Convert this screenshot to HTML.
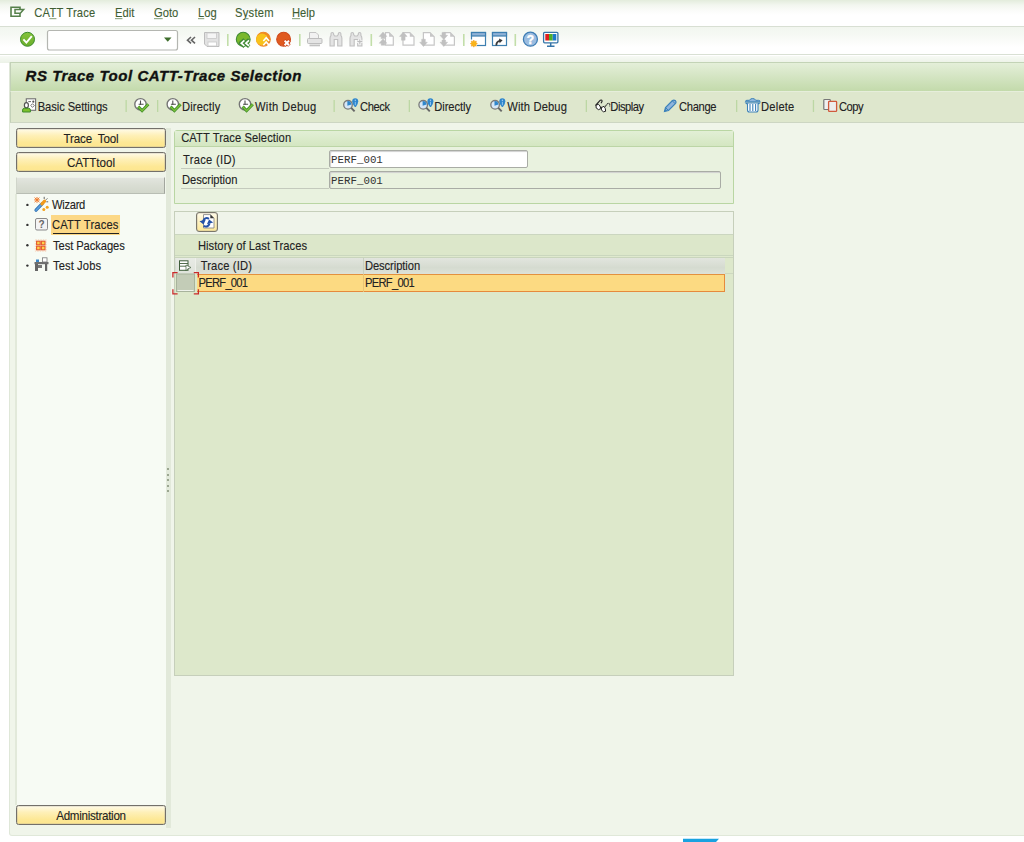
<!DOCTYPE html>
<html><head><meta charset="utf-8">
<style>
*{margin:0;padding:0;box-sizing:border-box}
html,body{width:1024px;height:842px;overflow:hidden;background:#fff;font-family:"Liberation Sans",sans-serif;font-size:11px;color:#222}
.a{position:absolute}
.t{position:absolute;white-space:nowrap;font-size:11.2px;line-height:13px;-webkit-text-stroke:0.1px currentColor;transform:scaleY(1.12);transform-origin:0 10.4px}
svg{position:absolute;overflow:visible}
#menubar{left:0;top:0;width:1024px;height:27px;background:linear-gradient(#e3ecdc 0px,#f2f6ef 5px,#fbfcfa 11px,#ffffff 15px,#ffffff 25px);border-bottom:1.3px solid #d8dfd3}
#menubar .t{color:#3f5e33;top:6.5px}
.u{text-decoration:underline;text-decoration-color:#8fa882}
#systb{left:0;top:27px;width:1024px;height:28px;background:linear-gradient(#f2f6ef 0px,#f6f9f4 8px,#fcfdfb 16px,#ffffff 20px);border-bottom:1.5px solid #d9e0d4}
#gap{left:0;top:55.5px;width:1024px;height:7.5px;background:linear-gradient(#f7faf5,#ecf2e7)}
.sep{position:absolute;width:2px;background:#c4dfae}
#frame{left:9px;top:62px;width:1015px;height:774px;background:#f0f5ea;border-left:1px solid #dfe7d8;border-bottom:1.5px solid #e0e8d9;border-radius:0 0 0 3px}
#title{left:10px;top:62px;width:1014px;height:29px;background:linear-gradient(#e4efd9,#c3daab);border-top:1.5px solid #c3d3b6;border-left:1px solid #c3d1b8}
#title .tt{position:absolute;left:14.5px;top:2.5px;font-size:15px;letter-spacing:0.55px;line-height:20px;font-weight:bold;font-style:italic;color:#111;white-space:nowrap;-webkit-text-stroke:0.35px #111}
#apptb{left:10px;top:91px;width:1014px;height:32px;background:#dee7cd;border-top:1px solid #e6eedb;border-bottom:1.6px solid #cdd6c3;border-left:1px solid #c3d1b8}
.btn{position:absolute;border:1px solid #73706a;border-radius:2.5px;background:linear-gradient(#fffbe9 0%,#fef0b8 35%,#fde895 75%,#fde68e);box-shadow:inset 0 0 0 0.3px #a9a59a;text-align:center;line-height:17px;padding-top:0.5px;font-size:11.6px;color:#222}
.bs{display:inline-block;transform:scaleY(1.1);transform-origin:0 12px;-webkit-text-stroke:0.1px currentColor}
#graybar{left:16px;top:176.5px;width:149px;height:17.5px;background:linear-gradient(#e2e5de,#d9ddd3 50%,#d2d7cb);border-top:1px solid #eef1ea;border-bottom:1px solid #b9beb4;border-right:1.5px solid #a2a69e;border-left:1px solid #d0d5ca}
#tree{left:15px;top:194px;width:151px;height:611px;background:#f7fbf4;border-left:2px solid #e2e9da}
#splitter{left:166px;top:128px;width:5px;height:700px;background:#e2e9da}
.dot{position:absolute;left:167px;width:2px;height:2px;background:#9ba690}
#g1{left:174px;top:130px;width:560px;height:74px;background:#e9f2df;border:1px solid #b9d6a3;border-radius:3px 3px 0 0}
#g1h{left:175px;top:131px;width:558px;height:16px;background:linear-gradient(#e2efd6,#d4e7c1);border-bottom:1px solid #bcd5a6}
.lbl{position:absolute;height:1.4px;background:#c4cabd}
.inp{position:absolute;border:1px solid #a9aca5;border-radius:2px;box-shadow:inset 1px 1px 1px #d0d0d0}
.mono{position:absolute;font-family:"Liberation Mono",monospace;font-size:10.8px;line-height:13px;color:#333;white-space:nowrap}
#g2{left:174px;top:211px;width:560px;height:465px;background:#dde8cb;border:1px solid #c6cfbb}
#g2tb{left:175px;top:212px;width:558px;height:23px;background:#eff4ea;border-bottom:1px solid #cbd6c0}
#g2title{left:175px;top:235px;width:558px;height:23px;background:linear-gradient(#dce7ca 0,#dce7ca 20px,#cad7be 20px,#cad7be 21px,#dfe9ce 21px,#dfe9ce 22px);border-bottom:1px solid #c9d5bc}
#thead{left:175px;top:258px;width:550px;height:16px;background:linear-gradient(#e2e5de,#d5dbd0 60%,#dde2d8)}
#row{left:197px;top:274px;width:528px;height:18px;background:#fcda82;border-top:1.5px solid #e3913f;border-bottom:1px solid #e68a3c;border-right:1px solid #e68a3c}
</style></head><body>

<!-- menu bar -->
<div id="menubar" class="a">
  <svg style="left:0;top:0" width="30" height="26">
    <path d="M20 9 V7.2 H11 V16.3 H20 V14" fill="none" stroke="#55804a" stroke-width="1.6"/>
    <path d="M15 9.6 H23.6 L20.3 13.2 H15 Z" fill="none" stroke="#55804a" stroke-width="1.5"/>
  </svg>
  <div class="t" style="left:34.3px;letter-spacing:0.19px">CA<span class="u">T</span>T Trace</div>
  <div class="t" style="left:115px"><span class="u">E</span>dit</div>
  <div class="t" style="left:154px"><span class="u">G</span>oto</div>
  <div class="t" style="left:198px"><span class="u">L</span>og</div>
  <div class="t" style="left:235px;letter-spacing:0.24px">S<span class="u">y</span>stem</div>
  <div class="t" style="left:292px"><span class="u">H</span>elp</div>
</div>

<!-- system toolbar -->
<div id="systb" class="a"></div>
<div id="gap" class="a"></div>
<svg style="left:0;top:0" width="1024" height="56">
  <!-- check -->
  <defs><linearGradient id="gck" x1="0" y1="0" x2="0" y2="1"><stop offset="0" stop-color="#86c43c"/><stop offset="1" stop-color="#6aad2b"/></linearGradient></defs>
  <circle cx="27.5" cy="39.3" r="7" fill="url(#gck)" stroke="#3f8d30" stroke-width="1"/>
  <path d="M23.4 39.4 L26.4 42.6 L31.8 36.2" fill="none" stroke="#fff" stroke-width="1.9"/>
  <!-- command field -->
  <rect x="47.5" y="30.5" width="130" height="19.5" rx="2" fill="#fff" stroke="#b4b6b1" stroke-width="1.2"/>
  <path d="M164 37.6 H171.5 L167.75 41.8 Z" fill="#3f6e2d"/>
  <!-- << -->
  <path d="M191 37 L187.5 40.2 L191 43.4 M195 37 L191.5 40.2 L195 43.4" fill="none" stroke="#666" stroke-width="1.6"/>
  <!-- save -->
  <path d="M204.5 32.5 H219 V46.5 H207 L204.5 44 Z" fill="#e2e2e2" stroke="#bdbdbd" stroke-width="1"/>
  <rect x="207" y="33" width="9.5" height="5.5" fill="#f5f5f5" stroke="#c8c8c8" stroke-width="0.8"/>
  <rect x="208" y="42" width="8.5" height="4" fill="#fff" stroke="#c8c8c8" stroke-width="0.8"/>
  <!-- separators -->
  <rect x="227" y="34" width="1.6" height="12" fill="#c2dea9"/>
  <rect x="299" y="34" width="1.6" height="12" fill="#c2dea9"/>
  <rect x="370.5" y="34" width="1.6" height="12" fill="#c2dea9"/>
  <rect x="463" y="34" width="1.6" height="12" fill="#c2dea9"/>
  <rect x="514.5" y="34" width="1.6" height="12" fill="#c2dea9"/>
  <!-- back green -->
  <circle cx="243.2" cy="39.2" r="6.9" fill="#7ab82c" stroke="#3f8a34" stroke-width="1.1"/>
  <path d="M244.6 39.6 L240.4 43.2 L244.6 46.6 M249.2 39.6 L245 43.2 L249.2 46.6" fill="none" stroke="#3f8a34" stroke-width="3.6" stroke-linejoin="round"/>
  <path d="M244.4 40.4 L241.3 43.2 L244.4 45.8 M249 40.4 L245.9 43.2 L249 45.8" fill="none" stroke="#fff" stroke-width="1.7"/>
  <!-- exit orange -->
  <circle cx="263.4" cy="39.2" r="6.9" fill="#ef8a25" stroke="#ef8a25" stroke-width="1.1"/>
  <circle cx="262" cy="39.4" r="5.9" fill="#f8c21b"/>
  <path d="M263.3 41 L266.2 37.8 L269.1 41 M263.3 45.2 L266.2 42 L269.1 45.2" fill="none" stroke="#fff" stroke-width="1.6"/>
  <!-- cancel red -->
  <circle cx="283.6" cy="39.2" r="6.9" fill="#e05a1f" stroke="#cf4a1c" stroke-width="1.1"/>
  <path d="M284.2 40.2 L289.4 45.6 M289.4 40.2 L284.2 45.6" stroke="#cf4a1c" stroke-width="3.6"/>
  <path d="M284.6 40.6 L289 45.2 M289 40.6 L284.6 45.2" stroke="#fff" stroke-width="2"/>
  <!-- print -->
  <path d="M309.5 32.5 H316 L318.5 35 V38.5 H309.5 Z" fill="#f2f2f2" stroke="#c4c4c4" stroke-width="1"/>
  <rect x="307.5" y="38.5" width="14.5" height="5" rx="1" fill="#e4e4e4" stroke="#bdbdbd" stroke-width="1"/>
  <rect x="309.5" y="44.5" width="10.5" height="1.8" fill="#c2c2c2"/>
  <!-- binoculars -->
  <path d="M330.0 46 V38.5 Q330.0 36.5 331.0 35.5 V33.8 Q331.0 32.5 332.3 32.5 Q333.6 32.5 333.6 33.8 V34.5 L334.7 36 H337.2 L338.3 34.5 V33.8 Q338.3 32.5 339.6 32.5 Q340.9 32.5 340.9 33.8 V35.5 Q341.9 36.5 341.9 38.5 V46 H337.7 V39.5 H334.2 V46 Z" fill="#e4e4e4" stroke="#c0c0c0" stroke-width="1.1"/>
  <path d="M350.0 46 V38.5 Q350.0 36.5 351.0 35.5 V33.8 Q351.0 32.5 352.3 32.5 Q353.6 32.5 353.6 33.8 V34.5 L354.7 36 H357.2 L358.3 34.5 V33.8 Q358.3 32.5 359.6 32.5 Q360.9 32.5 360.9 33.8 V35.5 Q361.9 36.5 361.9 38.5 V46 H357.7 V39.5 H354.2 V46 Z" fill="#e4e4e4" stroke="#c0c0c0" stroke-width="1.1"/>
  <path d="M359.8 38.8 V44.6 M356.9 41.7 H362.7" stroke="#fff" stroke-width="2.6"/>
  <path d="M359.8 39.2 V44.2 M357.3 41.7 H362.3" stroke="#bdbdbd" stroke-width="1.2"/>
  <!-- page icons -->
  <path d="M385.5 32.6 H389.1 L393.3 36.8 V45.1 H385.5 Z" fill="#fff" stroke="#c6c6c6" stroke-width="1.2"/>
  <path d="M389.1 32.6 L393.3 36.8 H389.1 Z" fill="#c6c6c6"/>
  <path d="M403 32.6 H409.8 L414 36.8 V45.1 H403 Z" fill="#fff" stroke="#c6c6c6" stroke-width="1.2"/>
  <path d="M409.8 32.6 L414 36.8 H409.8 Z" fill="#c6c6c6"/>
  <path d="M423.4 32.6 H430.0 L434.2 36.8 V45.1 H423.4 Z" fill="#fff" stroke="#c6c6c6" stroke-width="1.2"/>
  <path d="M430.0 32.6 L434.2 36.8 H430.0 Z" fill="#c6c6c6"/>
  <path d="M444 32.6 H450.2 L454.4 36.8 V45.1 H444 Z" fill="#fff" stroke="#c6c6c6" stroke-width="1.2"/>
  <path d="M450.2 32.6 L454.4 36.8 H450.2 Z" fill="#c6c6c6"/>
  <path d="M383 32.1 L386.8 36.4 H384.8 V38.6 H381.2 V36.4 H379.2 Z M383 38.9 L386.8 43.199999999999996 H384.8 V45.2 H381.2 V43.199999999999996 H379.2 Z M403.3 32.1 L407.1 36.4 H405.1 V40.2 H401.5 V36.4 H399.5 Z M423.5 46.5 L427.3 42.2 H425.3 V39.2 H421.7 V42.2 H419.7 Z M443.8 39.6 L447.6 35.300000000000004 H445.6 V32.4 H442.0 V35.300000000000004 H440.0 Z M443.8 46.5 L447.6 42.2 H445.6 V40 H442.0 V42.2 H440.0 Z " fill="#c0c0c0" stroke="#c0c0c0" stroke-width="0.5"/>
  <!-- new session -->
  <rect x="471.5" y="32.5" width="14" height="13" fill="#fff" stroke="#3d7fb0" stroke-width="1.2"/>
  <rect x="471.5" y="32.5" width="14" height="3.5" fill="#8fb2d6" stroke="#3d7fb0" stroke-width="1.2"/>
  <rect x="469.5" y="39.5" width="7.5" height="7.5" fill="#fff"/><polygon points="477.40,43.60 476.02,44.52 476.35,46.15 474.72,45.82 473.80,47.20 472.88,45.82 471.25,46.15 471.58,44.52 470.20,43.60 471.58,42.68 471.25,41.05 472.88,41.38 473.80,40.00 474.72,41.38 476.35,41.05 476.02,42.68" fill="#f9b418" stroke="#f39a1e" stroke-width="0.5"/>
  <!-- shortcut -->
  <rect x="492.5" y="32.5" width="14" height="13" fill="#fff" stroke="#3d7fb0" stroke-width="1.2"/>
  <rect x="492.5" y="32.5" width="14" height="3.5" fill="#8fb2d6" stroke="#3d7fb0" stroke-width="1.2"/>
  <path d="M496.3 45.5 Q496.3 41.2 500.2 40.8" fill="none" stroke="#3a3a3a" stroke-width="1.8"/><path d="M499 38.6 L502.6 40.2 L499.6 43.2 Z" fill="#3a3a3a"/>
  <!-- help -->
  <circle cx="530.4" cy="39.2" r="7" fill="#9bbce0" stroke="#3e7db4" stroke-width="1.3"/>
  <text x="530.5" y="43.9" text-anchor="middle" font-family="Liberation Sans" font-weight="bold" font-size="12" fill="#fff" stroke="#fff" stroke-width="0.4">?</text>
  <!-- customize -->
  <rect x="543.6" y="32.3" width="14.3" height="10.5" rx="1" fill="#fff" stroke="#3574a8" stroke-width="1.3"/>
  <rect x="545.3" y="34" width="3.7" height="6.5" fill="#e01f1f"/>
  <rect x="549" y="34" width="3.7" height="6.5" fill="#4eae2a"/>
  <rect x="552.7" y="34" width="3.6" height="6.5" fill="#1b78c9"/>
  <path d="M550.7 43 V45.5 M547 46.2 H554.5" stroke="#3574a8" stroke-width="1.5"/>
</svg>

<!-- frame -->
<div id="frame" class="a"></div>
<div id="title" class="a"><div class="tt">RS Trace Tool CATT-Trace Selection</div></div>
<div id="apptb" class="a"></div>

<!-- app toolbar content -->
<svg style="left:0;top:0" width="1024" height="122">
  <!-- basic settings icon -->
  <rect x="26.3" y="98.8" width="9.3" height="11.5" fill="#fff" stroke="#707070" stroke-width="1.1"/>
  <path d="M28.3 101.6 H31" stroke="#666" stroke-width="1"/><circle cx="33.3" cy="101.7" r="1.1" fill="#555"/>
  <path d="M32.5 103.7 L34.3 105.5 L32.5 107.3 L30.7 105.5 Z" fill="none" stroke="#666" stroke-width="0.9"/>
  <ellipse cx="26.4" cy="105.3" rx="2" ry="2.6" fill="#fff" stroke="#555" stroke-width="1.2"/>
  <path d="M22.6 112 V110 Q22.6 108.3 24.4 108.3 H28.6 Q30.4 108.3 30.4 110 V112 Z" fill="#7cc02c" stroke="#3f8a2a" stroke-width="1"/>
  <!-- separators -->
  <g fill="#bcd7a4">
    <rect x="125.5" y="100" width="1.3" height="12"/>
    <rect x="157" y="100" width="1.3" height="12"/>
    <rect x="333.5" y="100" width="1.3" height="12"/>
    <rect x="408.7" y="100" width="1.3" height="12"/>
    <rect x="585.7" y="100" width="1.3" height="12"/>
    <rect x="736" y="100" width="1.3" height="12"/>
    <rect x="812.8" y="100" width="1.3" height="12"/>
  </g>
  <!-- clock+check icons -->
  <g>
    <circle cx="140.5" cy="104.3" r="5.7" fill="#fff" stroke="#757575" stroke-width="1.4"/>
    <path d="M140.5 100.6 V105 M138.6 104.3 H143.6" stroke="#505050" stroke-width="1.1"/>
    <path d="M138.2 106.6 L142.1 110.7 L148.3 104.3" fill="none" stroke="#3f8c2a" stroke-width="3"/>
    <path d="M138.2 106.6 L142.1 110.7 L148.3 104.3" fill="none" stroke="#7cc23a" stroke-width="1.3"/>
  </g>
  <g transform="translate(32.3 0)">
    <circle cx="140.5" cy="104.3" r="5.7" fill="#fff" stroke="#757575" stroke-width="1.4"/>
    <path d="M140.5 100.6 V105 M138.6 104.3 H143.6" stroke="#505050" stroke-width="1.1"/>
    <path d="M138.2 106.6 L142.1 110.7 L148.3 104.3" fill="none" stroke="#3f8c2a" stroke-width="3"/>
    <path d="M138.2 106.6 L142.1 110.7 L148.3 104.3" fill="none" stroke="#7cc23a" stroke-width="1.3"/>
  </g>
  <g transform="translate(104.5 0)">
    <circle cx="140.5" cy="104.3" r="5.7" fill="#fff" stroke="#757575" stroke-width="1.4"/>
    <path d="M140.5 100.6 V105 M138.6 104.3 H143.6" stroke="#505050" stroke-width="1.1"/>
    <path d="M138.2 106.6 L142.1 110.7 L148.3 104.3" fill="none" stroke="#3f8c2a" stroke-width="3"/>
    <path d="M138.2 106.6 L142.1 110.7 L148.3 104.3" fill="none" stroke="#7cc23a" stroke-width="1.3"/>
  </g>
  <!-- magnifier icons -->
  <g>
    <circle cx="348" cy="104.8" r="4.3" fill="#d6e6f6" stroke="#7a7a7a" stroke-width="1.3"/>
    <path d="M347.4 105.8 V100.9 A3.9 3.9 0 0 1 351.4 104.6 Z" fill="#2f86cc"/>
    <path d="M351.2 107.8 L354.6 111.3" stroke="#666" stroke-width="1.9"/>
    <path d="M352.2 101.2 A3 3 0 0 1 358.2 101.2 Q358.2 104.2 355.8 107 H354.8 Q352.2 104.2 352.2 101.2 Z" fill="#2f86cc"/>
    <path d="M355.3 101.8 V105.2" stroke="#8cc4ee" stroke-width="1"/><circle cx="355.3" cy="100.2" r="0.7" fill="#a8d0f0"/>
  </g>
  <g transform="translate(75.2 0)">
    <circle cx="348" cy="104.8" r="4.3" fill="#d6e6f6" stroke="#7a7a7a" stroke-width="1.3"/>
    <path d="M347.4 105.8 V100.9 A3.9 3.9 0 0 1 351.4 104.6 Z" fill="#2f86cc"/>
    <path d="M351.2 107.8 L354.6 111.3" stroke="#666" stroke-width="1.9"/>
    <path d="M352.2 101.2 A3 3 0 0 1 358.2 101.2 Q358.2 104.2 355.8 107 H354.8 Q352.2 104.2 352.2 101.2 Z" fill="#2f86cc"/>
    <path d="M355.3 101.8 V105.2" stroke="#8cc4ee" stroke-width="1"/><circle cx="355.3" cy="100.2" r="0.7" fill="#a8d0f0"/>
  </g>
  <g transform="translate(147.1 0)">
    <circle cx="348" cy="104.8" r="4.3" fill="#d6e6f6" stroke="#7a7a7a" stroke-width="1.3"/>
    <path d="M347.4 105.8 V100.9 A3.9 3.9 0 0 1 351.4 104.6 Z" fill="#2f86cc"/>
    <path d="M351.2 107.8 L354.6 111.3" stroke="#666" stroke-width="1.9"/>
    <path d="M352.2 101.2 A3 3 0 0 1 358.2 101.2 Q358.2 104.2 355.8 107 H354.8 Q352.2 104.2 352.2 101.2 Z" fill="#2f86cc"/>
    <path d="M355.3 101.8 V105.2" stroke="#8cc4ee" stroke-width="1"/><circle cx="355.3" cy="100.2" r="0.7" fill="#a8d0f0"/>
  </g>
  <!-- glasses -->
  <path d="M595.5 105.5 L600.3 100.2 Q602.3 99.4 602 101.6 L601 103.3" fill="none" stroke="#222" stroke-width="1.15"/>
  <path d="M596 105.2 L598.5 104.3 L600 106 L600.8 108.5 L598.6 109.7 L596.2 108 Z" fill="#fff" stroke="#222" stroke-width="1"/>
  <path d="M601.5 107.5 L604 106.3 L605.3 108.5 L605.6 111.3 L603.5 111.8 L601.3 110 Z" fill="#fff" stroke="#222" stroke-width="1"/>
  <path d="M600.6 107 L601.6 107.6" stroke="#222" stroke-width="1.2"/>
  <path d="M605 106.5 L608 103.3 Q610.2 102.8 609.6 106.4" fill="none" stroke="#222" stroke-width="1.1" stroke-dasharray="1.1 0.5"/>
  <!-- pencil -->
  <path d="M664.5 111.5 L665.5 107.5 L672.5 100.5 Q674 99.5 675.5 100.8 Q676.6 102 675.6 103.3 L668.5 110.5 Z" fill="#8fb4dc" stroke="#3c82ba" stroke-width="1.2"/>
  <path d="M665.5 107.5 L668.5 110.5 M672.3 100.8 L675.3 103.8" stroke="#3c82ba" stroke-width="1"/>
  <path d="M664.5 111.5 L665.3 108.8 L667.2 110.7 Z" fill="#3c82ba"/>
  <!-- trash -->
  <path d="M745.5 101.3 Q745.5 100.3 747 100.3 H749.5 Q750.2 98.5 752.6 98.5 Q755 98.5 755.7 100.3 H758.5 Q760 100.3 760 101.3 V101.8 H745.5 Z" fill="#8fb6dc" stroke="#3d82b8" stroke-width="1"/>
  <path d="M746 103 H759.5 L758 104.2 V110 Q758 112 756 112 H749.5 Q747.5 112 747.5 110 V104.2 Z" fill="#fff" stroke="#3d82b8" stroke-width="1.1"/>
  <path d="M750 104 V111 M752.8 104 V111 M755.6 104 V111" stroke="#3d82b8" stroke-width="1.1"/>
  <!-- copy -->
  <rect x="823.8" y="99.5" width="6.5" height="10" rx="0.7" fill="#f0f0f0" stroke="#777" stroke-width="1.2"/>
  <rect x="828.6" y="101.4" width="8" height="10" rx="0.7" fill="#ededed" stroke="#d05a3c" stroke-width="1.3"/>
</svg>
<div class="t" style="left:37.7px;top:100.5px;letter-spacing:-0.07px">Basic Settings</div>
<div class="t" style="left:182px;top:100.5px;letter-spacing:0.14px">Directly</div>
<div class="t" style="left:255px;top:100.5px;letter-spacing:0.31px">With Debug</div>
<div class="t" style="left:360px;top:100.5px;letter-spacing:-0.42px">Check</div>
<div class="t" style="left:434.3px;top:100.5px;letter-spacing:-0.08px">Directly</div>
<div class="t" style="left:507.3px;top:100.5px;letter-spacing:0.13px">With Debug</div>
<div class="t" style="left:610.3px;top:100.5px;letter-spacing:-0.47px">Display</div>
<div class="t" style="left:679.1px;top:100.5px;letter-spacing:-0.36px">Change</div>
<div class="t" style="left:761.1px;top:100.5px;letter-spacing:0.18px">Delete</div>
<div class="t" style="left:839px;top:100.5px;letter-spacing:-0.47px">Copy</div>

<!-- left nav -->
<div id="splitter" class="a"></div>
<div class="dot" style="top:468px"></div>
<div class="dot" style="top:473.6px"></div>
<div class="dot" style="top:479.2px"></div>
<div class="dot" style="top:484.8px"></div>
<div class="dot" style="top:490.4px"></div>
<div class="btn" style="left:16px;top:128px;width:150px;height:20px;letter-spacing:-0.15px"><span class="bs">Trace&nbsp; Tool</span></div>
<div class="btn" style="left:16px;top:152px;width:150px;height:20px"><span class="bs">CATTtool</span></div>
<div id="graybar" class="a"></div>
<div id="tree" class="a"></div>
<div class="btn" style="left:16px;top:805px;width:150px;height:20px;letter-spacing:-0.28px"><span class="bs">Administration</span></div>

<svg style="left:0;top:0" width="170" height="280">
  <g fill="#333">
    <circle cx="27.4" cy="204.9" r="1.2"/>
    <circle cx="27.4" cy="224.9" r="1.2"/>
    <circle cx="27.4" cy="245.3" r="1.2"/>
    <circle cx="27.4" cy="265.6" r="1.2"/>
  </g>
  <!-- wizard -->
  <path d="M36 210.2 L42.3 203.6" stroke="#2f6fb0" stroke-width="3.2" stroke-linecap="round"/>
  <path d="M36 210.2 L42.3 203.6" stroke="#5aa0e0" stroke-width="1.6" stroke-linecap="round"/>
  <path d="M42 203.8 L44.6 201.2" stroke="#f29a1a" stroke-width="3.2" stroke-linecap="round"/>
  <circle cx="43.8" cy="209.6" r="1.5" fill="#f5a21c"/>
  <circle cx="47.2" cy="207.2" r="1.5" fill="#f5a21c"/>
  <path d="M34.6 197.6 L39.4 202.2 M39.4 197.6 L34.6 202.2 M37 197 V202.8 M34.2 199.9 H39.8" stroke="#f0782a" stroke-width="1"/>
  <path d="M44.2 196.8 V199 M47.4 198.4 L46 199.8 M48.2 201.8 H46.4" stroke="#555" stroke-width="0.9"/>
  <!-- ? icon -->
  <rect x="35.5" y="218.5" width="12" height="11.5" rx="1.5" fill="#f4f4f4" stroke="#8a8a8a" stroke-width="1"/>
  <text x="41.5" y="228" text-anchor="middle" font-family="Liberation Sans" font-weight="bold" font-size="10" fill="#666">?</text>
  <!-- packages -->
  <rect x="35.3" y="239.8" width="11" height="11.4" fill="none" stroke="#f5c9a8" stroke-width="0.7" stroke-dasharray="1.5 1"/>
  <g fill="#fbd24c" stroke="#e5582a" stroke-width="1.1">
    <rect x="36.6" y="241.2" width="3.6" height="3.6"/><rect x="41.4" y="241.2" width="3.6" height="3.6"/>
    <rect x="36.6" y="246.2" width="3.6" height="3.6"/><rect x="41.4" y="246.2" width="3.6" height="3.6"/>
  </g>
  <!-- jobs -->
  <rect x="34.5" y="262" width="14" height="2.2" fill="#6e6e6e"/>
  <rect x="35" y="264" width="3" height="7" fill="#666"/>
  <rect x="45" y="264" width="2.2" height="7" fill="#666"/>
  <rect x="38" y="265" width="4" height="3" fill="#777"/>
  <rect x="36" y="259.5" width="3" height="2.5" fill="#3b87c7"/>
  <rect x="42.5" y="257.8" width="4.5" height="4.2" fill="#fff" stroke="#777" stroke-width="0.8"/>
</svg>
<div class="t" style="left:52px;top:199px;letter-spacing:-0.3px">Wizard</div>
<div class="a" style="left:50.5px;top:215px;width:69px;height:19.5px;background:#fcd886"></div>
<div class="a" style="left:52.5px;top:232.5px;width:66px;height:1.2px;background:#222"></div>
<div class="t" style="left:52px;top:219px;letter-spacing:0.15px">CATT Traces</div>
<div class="t" style="left:53px;top:239.5px;letter-spacing:-0.08px">Test Packages</div>
<div class="t" style="left:53px;top:260px;letter-spacing:0.1px">Test Jobs</div>

<!-- group 1 -->
<div id="g1" class="a"></div>
<div id="g1h" class="a"></div>
<div class="t" style="left:181.2px;top:132px;letter-spacing:0.08px">CATT Trace Selection</div>
<div class="t" style="left:183px;top:153.5px;letter-spacing:0.29px">Trace (ID)</div>
<div class="lbl" style="left:180.5px;top:168px;width:148.5px"></div>
<div class="t" style="left:182.1px;top:174px;letter-spacing:-0.07px">Description</div>
<div class="lbl" style="left:180.5px;top:188px;width:148.5px"></div>
<div class="inp" style="left:329px;top:150px;width:198.5px;height:18px;background:#fff"></div>
<div class="mono" style="left:331px;top:153.5px">PERF_001</div>
<div class="inp" style="left:329px;top:171px;width:392px;height:17.5px;background:#e9f2df"></div>
<div class="mono" style="left:331px;top:174.5px">PERF_001</div>

<!-- group 2 -->
<div id="g2" class="a"></div>
<div id="g2tb" class="a"></div>
<div id="g2title" class="a"></div>
<div class="btn" style="left:196px;top:212px;width:22px;height:20px;border:1.5px solid #7a776c;border-radius:3px;background:linear-gradient(#fffbe8,#fde898)"></div>

<div id="thead" class="a"></div>
<div class="a" style="left:176px;top:258px;width:18.5px;height:15px;background:linear-gradient(#e8ebe5,#dfe3db)"></div>
<div class="a" style="left:194.5px;top:258px;width:1.5px;height:16px;background:#eef0ea"></div>
<div class="a" style="left:362.5px;top:258px;width:1.2px;height:34px;background:#c9d0c1"></div>
<div id="row" class="a"></div>
<div class="a" style="left:725px;top:273px;width:8px;height:1px;background:#cdd8c0"></div>
<svg style="left:0;top:0" width="740" height="300">
  <!-- refresh -->
  <path d="M203.5 214.6 H210.5 L214 218.1 V228 H203.5 Z" fill="#fff" stroke="#8a8a8a" stroke-width="0.9"/>
  <path d="M210.3 214.6 L214 218.3 H210.3 Z" fill="#333"/>
  <path d="M209 218.8 C206.2 217.2 203.9 218.6 203.1 221.2" fill="none" stroke="#2552a8" stroke-width="2"/>
  <path d="M199.5 221.3 L205.8 219.6 L203.6 224.4 Z" fill="#2552a8"/>
  <path d="M203.6 225.9 C206.4 227.5 208.8 226.1 209.6 223.5" fill="none" stroke="#2552a8" stroke-width="2"/>
  <path d="M213.2 222.6 L206.9 224.3 L209.1 219.5 Z" fill="#2552a8"/>
  <!-- header icon -->
  <rect x="179.5" y="260.8" width="8.5" height="9.5" fill="#fff" stroke="#3f5e3a" stroke-width="1"/>
  <path d="M180 263.5 H188 M180 266.2 H188" stroke="#3f5e3a" stroke-width="0.9"/>
  <path d="M186 265 L191 267.5 L187.5 269 L186 271 Z" fill="#fff" stroke="#3f5e3a" stroke-width="0.7"/>
  <!-- row selector -->
  <rect x="176.5" y="274" width="18" height="17.5" fill="#c3ccb7" stroke="#a8b39c" stroke-width="1"/>
  <path d="M177.5 290.5 H193.5" stroke="#eef2ea" stroke-width="1"/>
  <path d="M172.9 277.6 V272.7 H177.6 M193.8 272.7 H198.4 V277.6 M172.9 289.2 V293.9 H177.6 M193.8 293.9 H198.4 V289.2" fill="none" stroke="#c92a2a" stroke-width="1.3"/>
</svg>
<div class="a" style="left:362.5px;top:274px;width:1.2px;height:18px;background:#e9c476"></div>
<div class="t" style="left:197.9px;top:240px;letter-spacing:0.05px">History of Last Traces</div>
<div class="t" style="left:200.7px;top:260px;letter-spacing:0.14px">Trace (ID)</div>
<div class="t" style="left:364.9px;top:260px;letter-spacing:-0.07px">Description</div>
<div class="t" style="left:198.5px;top:277px;letter-spacing:-0.74px">PERF_001</div>
<div class="t" style="left:365px;top:277px;letter-spacing:-0.72px">PERF_001</div>

<!-- bottom blue mark -->
<svg style="left:0;top:830" width="1024" height="12">
  <path d="M683 8.8 H719 L716 12 H683 Z" fill="#19a2e0"/>
</svg>
</body></html>
